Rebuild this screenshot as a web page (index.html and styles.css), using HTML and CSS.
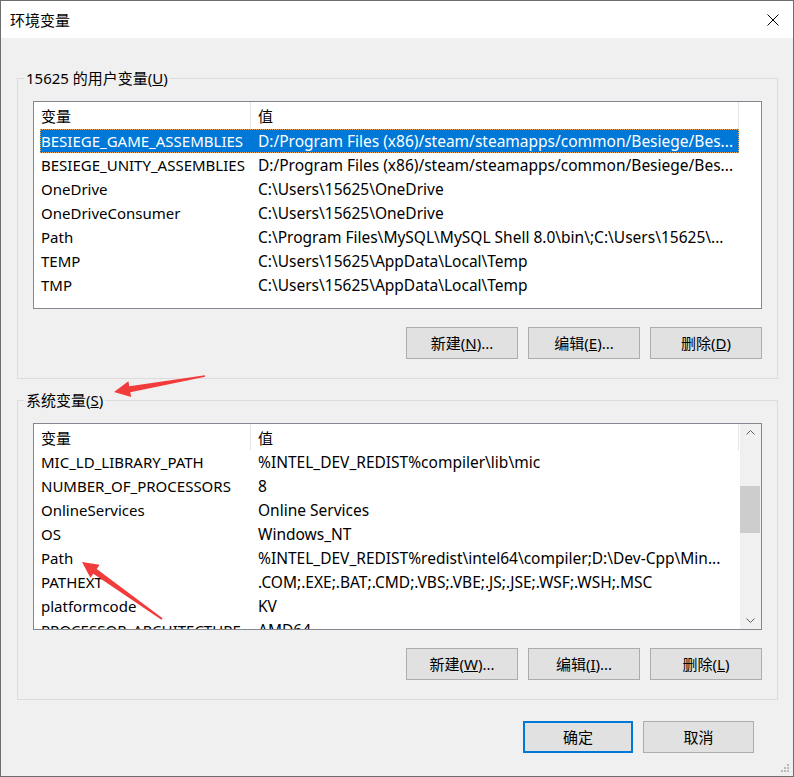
FILE: index.html
```html
<!DOCTYPE html>
<html lang="zh-CN">
<head>
<meta charset="utf-8">
<title>环境变量</title>
<link rel="stylesheet" href="styles.css">
</head>
<body>
<div class="window">
  <div class="titlebar">
    <span class="title">环境变量</span>
    <svg class="close" width="12" height="12" viewBox="0 0 12 12"><path d="M0.5 0.5 L11.5 11.5 M11.5 0.5 L0.5 11.5" stroke="#000" stroke-width="1" fill="none"/></svg>
  </div>
  <div class="body">
    <div class="group">
      <span class="legend">15625 的用户变量(<u>U</u>)</span>
      <div class="list list-user">
        <div class="rows">
          <div class="row head"><span class="c1">变量</span><span class="c2">值</span></div>
          <div class="row sel"><span class="c1">BESIEGE_GAME_ASSEMBLIES</span><span class="c2">D:/Program Files (x86)/steam/steamapps/common/Besiege/Bes...</span></div>
          <div class="row"><span class="c1">BESIEGE_UNITY_ASSEMBLIES</span><span class="c2">D:/Program Files (x86)/steam/steamapps/common/Besiege/Bes...</span></div>
          <div class="row"><span class="c1">OneDrive</span><span class="c2">C:\Users\15625\OneDrive</span></div>
          <div class="row"><span class="c1">OneDriveConsumer</span><span class="c2">C:\Users\15625\OneDrive</span></div>
          <div class="row"><span class="c1">Path</span><span class="c2">C:\Program Files\MySQL\MySQL Shell 8.0\bin\;C:\Users\15625\...</span></div>
          <div class="row"><span class="c1">TEMP</span><span class="c2">C:\Users\15625\AppData\Local\Temp</span></div>
          <div class="row"><span class="c1">TMP</span><span class="c2">C:\Users\15625\AppData\Local\Temp</span></div>
        </div>
      </div>
      <div class="btns">
        <button class="btn">新建(<u>N</u>)...</button>
        <button class="btn">编辑(<u>E</u>)...</button>
        <button class="btn">删除(<u>D</u>)</button>
      </div>
    </div>

    <div class="group group-sys">
      <span class="legend">系统变量(<u>S</u>)</span>
      <div class="list list-sys">
        <div class="rows">
          <div class="row head"><span class="c1">变量</span><span class="c2">值</span></div>
          <div class="row"><span class="c1">MIC_LD_LIBRARY_PATH</span><span class="c2">%INTEL_DEV_REDIST%compiler\lib\mic</span></div>
          <div class="row"><span class="c1">NUMBER_OF_PROCESSORS</span><span class="c2">8</span></div>
          <div class="row"><span class="c1">OnlineServices</span><span class="c2">Online Services</span></div>
          <div class="row"><span class="c1">OS</span><span class="c2">Windows_NT</span></div>
          <div class="row"><span class="c1">Path</span><span class="c2">%INTEL_DEV_REDIST%redist\intel64\compiler;D:\Dev-Cpp\Min...</span></div>
          <div class="row"><span class="c1">PATHEXT</span><span class="c2">.COM;.EXE;.BAT;.CMD;.VBS;.VBE;.JS;.JSE;.WSF;.WSH;.MSC</span></div>
          <div class="row"><span class="c1">platformcode</span><span class="c2">KV</span></div>
          <div class="row"><span class="c1">PROCESSOR_ARCHITECTURE</span><span class="c2">AMD64</span></div>
        </div>
        <div class="vscroll">
          <div class="sbtn"><svg width="9" height="5" viewBox="0 0 9 5"><path d="M0.5 4.5 L4.5 0.5 L8.5 4.5" stroke="#606060" fill="none"/></svg></div>
          <div class="track"><div class="thumb"></div></div>
          <div class="sbtn"><svg width="9" height="5" viewBox="0 0 9 5"><path d="M0.5 0.5 L4.5 4.5 L8.5 0.5" stroke="#606060" fill="none"/></svg></div>
        </div>
      </div>
      <div class="btns">
        <button class="btn">新建(<u>W</u>)...</button>
        <button class="btn">编辑(<u>I</u>)...</button>
        <button class="btn">删除(<u>L</u>)</button>
      </div>
    </div>

    <div class="footer">
      <button class="btn btn-ok">确定</button>
      <button class="btn btn-cancel">取消</button>
    </div>
  </div>

  <svg class="annot" width="794" height="777" viewBox="0 0 794 777">
    <polygon fill="#f23b3b" points="205,375.3 129.3,386.2 128.4,381.3 114,392 131.2,397.1 130.3,392.2 205.2,376.8"/>
    <polygon fill="#f23b3b" points="162.6,618.2 96.7,568.9 99.6,564.8 82,562 90.4,577.8 93.3,573.7 161.4,619.8"/>
  </svg>

  <svg class="grip" width="10" height="10" viewBox="0 0 10 10">
    <rect x="7" y="1" width="2" height="2" fill="#b8b8b8"/>
    <rect x="4" y="4" width="2" height="2" fill="#b8b8b8"/>
    <rect x="7" y="4" width="2" height="2" fill="#b8b8b8"/>
    <rect x="1" y="7" width="2" height="2" fill="#b8b8b8"/>
    <rect x="4" y="7" width="2" height="2" fill="#b8b8b8"/>
    <rect x="7" y="7" width="2" height="2" fill="#b8b8b8"/>
  </svg>
</div>
</body>
</html>
```

FILE: styles.css
```css
* { box-sizing: border-box; }

html, body {
  margin: 0;
  padding: 0;
  background: #f0f0f0;
}

body {
  font-family: "Segoe UI", "Noto Sans", "Noto Sans CJK SC", sans-serif;
  font-size: 15px;
  color: #000;
}

.window {
  position: relative;
  width: 794px;
  height: 777px;
  border: 1px solid #6e6e6e;
  background: #f0f0f0;
  display: flex;
  flex-direction: column;
  overflow: hidden;
}

.titlebar {
  height: 37px;
  flex: none;
  background: #fff;
  display: flex;
  align-items: center;
  justify-content: space-between;
  padding: 0 14px 0 9px;
}

.title {
  font-size: 15px;
  line-height: 20px;
}

.close { display: block; }

.body {
  padding: 40px 15px 0 16px;
  display: flex;
  flex-direction: column;
}

.group {
  border: 1px solid #dcdcdc;
  padding: 0 15px 19px 15px;
  display: flex;
  flex-direction: column;
}

.group-sys { margin-top: 21px; }

.legend {
  align-self: flex-start;
  margin: -11px 0 0 -9px;
  padding: 0 2px;
  line-height: 20px;
  height: 20px;
  background: #f0f0f0;
  white-space: nowrap;
}

.list {
  margin-top: 13px;
  border: 1px solid #828790;
  background: #fff;
  display: flex;
  overflow: hidden;
}

.list-user { height: 208px; }
.list-sys { height: 207px; }

.rows {
  flex: 1;
  padding-left: 6px;
  overflow: hidden;
}

.row {
  display: flex;
  width: 699px;
  height: 24px;
  align-items: center;
  white-space: nowrap;
}

.row.head { height: 27px; }
.list-sys .row.head { height: 26px; }

.c1 {
  width: 211px;
  flex: none;
  padding-left: 1px;
  overflow: hidden;
  font-size: 15px;
}

.c2 {
  width: 488px;
  flex: none;
  padding-left: 7px;
  overflow: hidden;
  font-size: 15.5px;
}

.head .c1, .head .c2 {
  height: 100%;
  display: flex;
  align-items: center;
  border-right: 1px solid #e5e5e5;
  font-size: 15px;
}

.row.sel {
  background: #0078d7;
  color: #fff;
  outline: 1px dotted #e9a45c;
  outline-offset: -1px;
}

.vscroll {
  width: 21px;
  flex: none;
  background: #f0f0f0;
  display: flex;
  flex-direction: column;
}

.sbtn {
  height: 17px;
  flex: none;
  display: flex;
  align-items: center;
  justify-content: center;
}

.sbtn svg { display: block; }

.track {
  flex: 1;
  padding-right: 1px;
}

.thumb {
  margin-top: 45px;
  height: 47px;
  background: #cdcdcd;
}

.btns {
  display: flex;
  justify-content: flex-end;
  gap: 10px;
  margin-top: 18px;
}

.btn {
  width: 112px;
  height: 32px;
  background: #e1e1e1;
  border: 1px solid #adadad;
  font-family: inherit;
  font-size: 15px;
  color: #000;
  padding: 0;
  margin: 0;
  line-height: 20px;
}

.footer {
  display: flex;
  justify-content: flex-end;
  gap: 10px;
  margin-top: 21px;
  padding-right: 24px;
}

.btn-ok {
  width: 110px;
  border: 2px solid #0078d7;
}

.btn-cancel { width: 111px; }

.annot {
  position: absolute;
  left: -1px;
  top: -1px;
  pointer-events: none;
}

.grip {
  position: absolute;
  right: 3px;
  bottom: 3px;
}
```
